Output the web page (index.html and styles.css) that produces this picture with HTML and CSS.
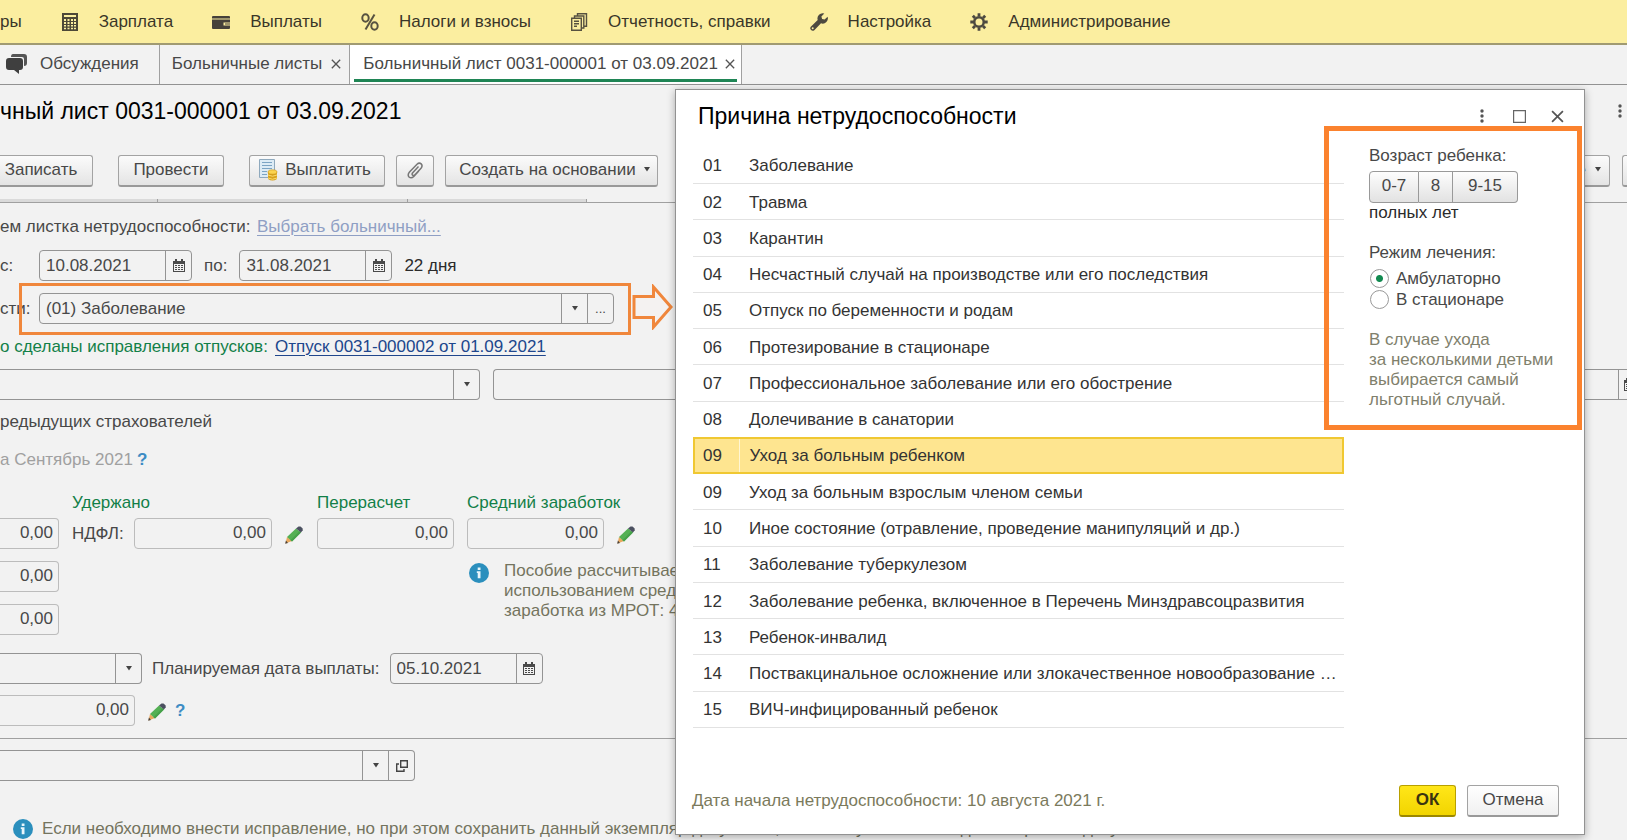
FILE: index.html
```html
<!DOCTYPE html>
<html lang="ru">
<head>
<meta charset="utf-8">
<title>Больничный лист 0031-000001 от 03.09.2021</title>
<link rel="stylesheet" href="styles.css">
</head>
<body>
<svg class="sprite" aria-hidden="true">
  <symbol id="i-cal" viewBox="0 0 12 13"><path fill="#4a4a4a" d="M0 2h12v11H0z"/><path fill="#4a4a4a" d="M2 0h2v3H2zM8 0h2v3H8z"/><path fill="#f2f2f2" d="M1 5h10v7H1z"/><path fill="#4a4a4a" d="M2 6h2v1H2zM5 6h2v1H5zM8 6h2v1H8zM2 8h2v1H2zM5 8h2v1H5zM8 8h2v1H8zM2 10h2v1H2zM5 10h2v1H5zM8 10h2v1H8z"/></symbol>
  <symbol id="i-down" viewBox="0 0 8 5"><path fill="#444" d="M1 0h6L4 4.500z"/></symbol>
  <symbol id="i-pencil" viewBox="0 0 18 18"><path fill="#e9a95e" d="M2 11l5 4-6.500 2.500z"/><path fill="#4a4038" d="M.9 14.600L3 17 .2 17.800z"/><path fill="#54b054" d="M11 2.500l5 4L7 15.500l-5-4.500z"/><path fill="#46a04a" d="M14.500 5.300l1.500 1.200L7 15.500l-1.500-1.200z"/><path fill="#4b5060" d="M11 2.500L13.500.5h2l2.200 2v1.800L16 6.500z"/></symbol>
  <symbol id="i-info" viewBox="0 0 20 20"><circle cx="10" cy="10" r="10" fill="#2b8fbd"/><path fill="#e8f6fb" d="M8.700 4.500h2.800v2.600H8.700zM7.800 8.300h3.700v6.900H8.700V9.900h-.9z"/></symbol>
  <symbol id="i-x" viewBox="0 0 12 12"><path d="M1 1l10 10M11 1L1 11" stroke="#555" stroke-width="1.600" fill="none"/></symbol>
  <symbol id="i-dots" viewBox="0 0 4 14"><g fill="#555"><circle cx="2" cy="2" r="1.700"/><circle cx="2" cy="7" r="1.700"/><circle cx="2" cy="12" r="1.700"/></g></symbol>
</svg>

<nav class="sections">
  <a href="#" class="section">ры</a>
  <a href="#" class="section"><svg viewBox="0 0 18 18"><path fill="#4d4838" d="M1 0h16v18H1z"/><path fill="#fbeea0" d="M3 2h12v2H3zM3 6h2v2H3zM6.500 6h2v2h-2zM10 6h2v2h-2zM13 6h2v2h-2zM3 9h2v2H3zM6.500 9h2v2h-2zM10 9h2v2h-2zM13 9h2v2h-2zM3 12h2v1.500H3zM6.500 12h2v1.500h-2zM10 12h2v1.500h-2zM13 12h2v1.500h-2zM3 14.800h2v1.500H3zM6.500 14.800h2v1.500h-2zM10 14.800h2v1.500h-2zM13 14.800h2v1.500h-2z"/></svg>Зарплата</a>
  <a href="#" class="section"><svg viewBox="0 0 18 18"><path fill="#45413a" d="M1 3h16q1 0 1 1v1.500H0V4q0-1 1-1zM0 6.500h18v3h-6.500v3H18V15q0 1-1 1H1q-1 0-1-1z"/><path fill="#45413a" d="M13 10.500h5v1h-5z"/></svg>Выплаты</a>
  <a href="#" class="section"><svg viewBox="0 0 18 18" fill="none" stroke="#575240" stroke-width="2"><ellipse cx="4.500" cy="5" rx="3.200" ry="3.700"/><ellipse cx="13.500" cy="13" rx="3.200" ry="3.700"/><path d="M13.500 1.500l-9 15"/></svg>Налоги и взносы</a>
  <a href="#" class="section"><svg viewBox="0 0 18 18" fill="none" stroke="#575240" stroke-width="1.400"><path d="M1.700 5.200h9.600v12H1.700zM4.500 5V3h9.300v12h-2M7.500 2.800V.8h9v12.500h-2.400M4 8.200h5M4 10.700h5M4 13.200h3"/></svg>Отчетность, справки</a>
  <a href="#" class="section"><svg viewBox="0 0 18 18"><path fill="#4d4a40" d="M17.600 3.700l-3 2.900-2.500-.7-.7-2.500L14.300.5A5.200 5.200 0 0 0 7.700 7L.8 13.700a2.500 2.500 0 0 0 3.500 3.500L11 10.300a5.200 5.200 0 0 0 6.600-6.600z"/><circle cx="2.700" cy="15.300" r="1" fill="#fbeea0"/></svg>Настройка</a>
  <a href="#" class="section"><svg viewBox="0 0 18 18" fill="none" stroke="#4d4a40"><circle cx="9" cy="9" r="4.800" stroke-width="2.600"/><path stroke-width="2.800" d="M9 .3v3M9 14.700v3M.3 9h3M14.700 9h3M2.800 2.800l2.200 2.200M13 13l2.200 2.200M15.200 2.800L13 5M5 13l-2.200 2.200"/></svg>Администрирование</a>
</nav>

<div class="tabs">
  <a href="#" class="tab tab-talk"><svg width="21" height="20" viewBox="0 0 21 20"><path fill="#555" d="M7 0h11q3 0 3 3v6q0 3-3 3V5q0-2-2-2H5q0-3 2-3z"/><path fill="#3f3f3f" d="M3 4h11q3 0 3 3v6q0 3-3 3h-1v4l-5-4H3q-3 0-3-3V7q0-3 3-3z"/></svg>Обсуждения</a>
  <a href="#" class="tab">Больничные листы<svg width="10" height="10"><use href="#i-x"/></svg></a>
  <a href="#" class="tab tab-active">Больничный лист 0031-000001 от 03.09.2021<svg width="10" height="10"><use href="#i-x"/></svg></a>
</div>

<main class="workspace">
  <div class="form">
    <div class="title-row"><h1>чный лист 0031-000001 от 03.09.2021</h1><button class="ghost" aria-label="Ещё"><svg width="4" height="14"><use href="#i-dots"/></svg></button></div>

    <div class="commands">
      <button class="btn btn-cut">Записать</button>
      <button class="btn btn-post">Провести</button>
      <button class="btn btn-pay"><svg width="20" height="22" viewBox="0 0 20 22"><path fill="#dcebf5" stroke="#8fa9bd" d="M.5.500h15v18H.5z"/><path stroke="#7ba4c4" d="M3 3.500h10M3 6.500h10M3 9.500h10M3 12.500h5M3 15.500h5"/><path fill="#d9a21c" d="M9 13h9v7q-4.500 3-9 0z"/><ellipse cx="13.500" cy="13" rx="4.500" ry="2.200" fill="#fbd34e" stroke="#c8921a" stroke-width=".6"/><path fill="none" stroke="#fbdc70" d="M9 16q4.500 2.500 9 0M9 19q4.500 2.500 9 0"/></svg>Выплатить</button>
      <button class="btn btn-clip" aria-label="Файлы"><svg width="18" height="18" viewBox="0 0 18 18" fill="none" stroke="#777" stroke-width="1.500"><path d="M12.500 5.500l-6 6.500q-1 1.500.3 2.300 1.200.6 2.200-.5l6-6.600q2-2.500.2-4.300-2-1.700-4.200.3L3.500 11q-2.300 2.700-.5 5 2.300 1.800 4.800-.5l5-5.500"/></svg></button>
      <button class="btn btn-create">Создать на основании<svg width="8" height="5"><use href="#i-down"/></svg></button>
      <span class="spacer"></span>
      <button class="btn btn-more">Еще<svg width="8" height="5"><use href="#i-down"/></svg></button>
      <button class="btn btn-edge" aria-label="Справка"></button>
    </div>

    <div class="pages"><i class="page-a"></i><i class="page-b"></i><i class="page-c"></i></div>

    <div class="row row-source"><span class="cap cap-source">ем листка нетрудоспособности:</span><a href="#" class="link link-pale">Выбрать больничный...</a></div>

    <div class="row row-dates">
      <label class="cap cap-from" for="from">с:</label>
      <span class="field field-date"><input id="from" value="10.08.2021"><button aria-label="Календарь"><svg width="12" height="13"><use href="#i-cal"/></svg></button></span>
      <label for="to">по:</label>
      <span class="field field-date"><input id="to" value="31.08.2021"><button aria-label="Календарь"><svg width="12" height="13"><use href="#i-cal"/></svg></button></span>
      <span class="dark">22 дня</span>
    </div>

    <div class="row row-reason">
      <label class="cap cap-reason" for="reason">сти:</label>
      <span class="field field-reason"><input id="reason" value="(01) Заболевание"><button aria-label="Список"><svg width="8" height="5"><use href="#i-down"/></svg></button><button class="small">...</button></span>
      <span class="frame frame-reason"></span>
      <svg class="arrow" width="42" height="46" viewBox="0 0 42 46"><path d="M2 12.500h19.500V3L39 23 21.500 43V33.500H2z" fill="#f4f2f1" stroke="#f0873c" stroke-width="3"/></svg>
    </div>

    <div class="row row-fix"><span class="cap cap-fix green">о сделаны исправления отпусков:</span><a href="#" class="link">Отпуск 0031-000002 от 01.09.2021</a></div>

    <div class="row row-wide">
      <span class="field field-cut field-cond"><input aria-label="Условие"><button aria-label="Список"><svg width="8" height="5"><use href="#i-down"/></svg></button></span>
      <span class="field field-rest"><input aria-label="Нарушение"><button class="sliver" aria-label="Календарь"><svg width="12" height="13"><use href="#i-cal"/></svg></button></span>
    </div>

    <div class="row row-prev"><span>редыдущих страхователей</span></div>
    <div class="row row-month"><span class="cap cap-month muted">а Сентябрь 2021</span><a href="#" class="help">?</a></div>

    <div class="sums">
      <div class="sum-col col-accrued">
        <span class="head"></span>
        <span class="field field-cut field-num"><input aria-label="Начислено" value="0,00" readonly></span>
        <span class="field field-cut field-num"><input aria-label="За счет работодателя" value="0,00" readonly></span>
        <span class="field field-cut field-num"><input aria-label="За счет ФСС" value="0,00" readonly></span>
      </div>
      <div class="sum-col col-held">
        <span class="head">Удержано</span>
        <div class="line"><label class="cap-ndfl" for="ndfl">НДФЛ:</label><span class="field field-num"><input id="ndfl" value="0,00" readonly></span><svg class="pencil" width="18" height="18"><use href="#i-pencil"/></svg></div>
      </div>
      <div class="sum-col col-recalc">
        <label class="head" for="recalc">Перерасчет</label>
        <span class="field field-num"><input id="recalc" value="0,00" readonly></span>
      </div>
      <div class="sum-col col-avg">
        <label class="head" for="avg">Средний заработок</label>
        <div class="line"><span class="field field-num"><input id="avg" value="0,00" readonly></span><svg class="pencil" width="18" height="18"><use href="#i-pencil"/></svg></div>
        <div class="note"><svg width="20" height="20"><use href="#i-info"/></svg><p>Пособие рассчитывае<br>использованием средн<br>заработка из МРОТ: 4</p></div>
      </div>
    </div>

    <div class="row row-plan">
      <span class="field field-cut field-pay"><input aria-label="Выплата"><button aria-label="Список"><svg width="8" height="5"><use href="#i-down"/></svg></button></span>
      <label for="plan">Планируемая дата выплаты:</label>
      <span class="field field-date"><input id="plan" value="05.10.2021"><button aria-label="Календарь"><svg width="12" height="13"><use href="#i-cal"/></svg></button></span>
    </div>
    <div class="row row-total">
      <span class="field field-cut field-num field-total"><input aria-label="Итого" value="0,00" readonly></span><svg class="pencil" width="18" height="18"><use href="#i-pencil"/></svg><a href="#" class="help">?</a>
    </div>
    <hr>
    <div class="row row-resp">
      <span class="field field-cut field-resp"><input aria-label="Ответственный"><button aria-label="Список"><svg width="8" height="5"><use href="#i-down"/></svg></button><button aria-label="Открыть"><svg width="12" height="12" viewBox="0 0 12 12" fill="none" stroke="#444" stroke-width="1.400"><path d="M4.700.7h6.600v6.600H4.700zM3 4H.7v7.300H8V9"/></svg></button></span>
    </div>
    <div class="hint"><svg width="20" height="20"><use href="#i-info"/></svg><span>Если необходимо внести исправление, но при этом сохранить данный экземпляр документа, воспользуйтесь командой Исправить документ</span></div>
  </div>

  <section class="dialog" role="dialog" aria-labelledby="dlg">
    <header class="dlg-head">
      <h2 id="dlg">Причина нетрудоспособности</h2>
      <button class="ghost ghost-menu" aria-label="Меню"><svg width="4" height="14"><use href="#i-dots"/></svg></button>
      <button class="ghost" aria-label="Развернуть"><svg width="13" height="13" viewBox="0 0 13 13"><path fill="none" stroke="#666" stroke-width="1.200" d="M.6.600h11.800v11.800H.6z"/></svg></button>
      <button class="ghost" aria-label="Закрыть"><svg width="13" height="13"><use href="#i-x"/></svg></button>
    </header>
    <div class="dlg-body">
      <table class="reasons">
        <tbody>
        <tr><td class="num">01</td><td>Заболевание</td></tr>
        <tr><td class="num">02</td><td>Травма</td></tr>
        <tr><td class="num">03</td><td>Карантин</td></tr>
        <tr><td class="num">04</td><td>Несчастный случай на производстве или его последствия</td></tr>
        <tr><td class="num">05</td><td>Отпуск по беременности и родам</td></tr>
        <tr><td class="num">06</td><td>Протезирование в стационаре</td></tr>
        <tr><td class="num">07</td><td>Профессиональное заболевание или его обострение</td></tr>
        <tr><td class="num">08</td><td>Долечивание в санатории</td></tr>
        <tr class="selected"><td class="num">09</td><td>Уход за больным ребенком</td></tr>
        <tr><td class="num">09</td><td>Уход за больным взрослым членом семьи</td></tr>
        <tr><td class="num">10</td><td>Иное состояние (отравление, проведение манипуляций и др.)</td></tr>
        <tr><td class="num">11</td><td>Заболевание туберкулезом</td></tr>
        <tr><td class="num">12</td><td>Заболевание ребенка, включенное в Перечень Минздравсоцразвития</td></tr>
        <tr><td class="num">13</td><td>Ребенок-инвалид</td></tr>
        <tr><td class="num">14</td><td>Поствакцинальное осложнение или злокачественное новообразование …</td></tr>
        <tr><td class="num">15</td><td>ВИЧ-инфицированный ребенок</td></tr>
        </tbody>
      </table>
      <aside class="side">
        <span>Возраст ребенка:</span>
        <div class="ages"><button class="age-a">0-7</button><button class="age-b">8</button><button class="age-c">9-15</button></div>
        <span class="dark">полных лет</span>
        <fieldset class="mode">
          <legend>Режим лечения:</legend>
          <label><input type="radio" name="mode" checked>Амбулаторно</label>
          <label><input type="radio" name="mode">В стационаре</label>
        </fieldset>
        <p class="side-note">В случае ухода<br>за несколькими детьми<br>выбирается самый<br>льготный случай.</p>
      </aside>
    </div>
    <footer class="dlg-foot"><span>Дата начала нетрудоспособности: 10 августа 2021 г.</span><button class="btn btn-ok">ОК</button><button class="btn btn-cancel">Отмена</button></footer>
    <span class="frame frame-side"></span>
  </section>
</main>
</body>
</html>
```
FILE: styles.css
```css
* { box-sizing: border-box; }
body {
  margin: 0;
  min-height: 100vh;
  overflow: hidden;
  background: #f2f2f2;
  color: #484848;
  font: 17px/20px "Liberation Sans", Arial, sans-serif;
}
button, input { font: inherit; color: inherit; }
a { color: inherit; text-decoration: none; }
svg { flex: none; display: block; }
.sprite { position: absolute; width: 0; height: 0; }
.dark { color: #2b2b2b; }
.green { color: #128048; }
.muted { color: #a0a0a0; }

.sections {
  display: flex;
  align-items: center;
  gap: 39px;
  height: 45px;
  background: #fbeea0;
  border-bottom: 2px solid #a09a72;
  color: #3a3628;
}
.section { display: flex; align-items: center; gap: 20px; white-space: nowrap; }
.section svg { width: 18px; height: 18px; }

.tabs { display: flex; height: 40px; border-bottom: 1px solid #929292; }
.tab {
  display: flex;
  align-items: center;
  gap: 9px;
  padding: 0 8px 1px 12px;
  border-right: 1px solid #a0a0a0;
  white-space: nowrap;
}
.tab-talk { padding: 0 20px 1px 6px; gap: 13px; }
.tab-active {
  height: 37px;
  gap: 7px;
  margin-left: 4px;
  padding: 3px 2px 0 9px;
  background: #fff;
  border-bottom: 3px solid #1f8555;
  border-right: 0;
  box-shadow: -4px 0 #fff, 4px 0 #fff, 0 2px #fff, -4px 2px #fff, 4px 2px #fff, 5px 0 #a0a0a0, 5px 2px #a0a0a0;
}

.workspace { position: relative; }
.form { display: flex; flex-direction: column; }
h1, h2 { margin: 0; font-size: 23px; line-height: 30px; font-weight: normal; color: #000; white-space: nowrap; }
.title-row { display: flex; justify-content: space-between; align-items: center; padding: 11px 5px 0 0; }
.ghost { display: grid; place-items: center; padding: 0; border: 0; background: none; }
.ghost-menu { margin-right: 4px; }

.btn {
  display: flex;
  align-items: center;
  justify-content: center;
  height: 32px;
  padding: 0 0 2px;
  border: 1px solid #a3a3a3;
  border-bottom: 2px solid #999;
  border-radius: 3px;
  background: linear-gradient(#fbfbfb, #e4e4e4);
  white-space: nowrap;
}
.commands { display: flex; margin-top: 29px; }
.btn-cut { width: 93px; border-left: 0; border-radius: 0 3px 3px 0; padding-right: 10px; }
.btn-post { width: 106px; margin-left: 25px; }
.btn-pay { width: 136px; margin-left: 25px; gap: 6px; padding-right: 4px; }
.btn-clip { width: 38px; margin-left: 11px; }
.btn-create { width: 213px; margin-left: 11px; gap: 7px; padding-left: 7px; }
.spacer { flex: 1; }
.btn-more { width: 70px; gap: 8px; justify-content: flex-end; padding-right: 7px; }
.btn-edge { width: 5px; margin-left: 12px; border-right: 0; border-radius: 3px 0 0 3px; }

.pages { display: flex; height: 4px; margin-top: 12px; border-bottom: 1px solid #a0a0a0; }
.pages i { background: #dadada; border-right: 1px solid #a0a0a0; }
.page-a { width: 158px; }
.page-b { width: 250px; }
.page-c { width: 179px; }

.row { display: flex; align-items: center; position: relative; height: 31px; white-space: nowrap; }
.cap { flex: none; }
.link { color: #20468c; text-decoration: underline; text-underline-offset: 3px; text-decoration-thickness: 1px; }
.link-pale { color: #8f9fc4; }
.help { color: #3d8cc4; font-weight: bold; }

.field {
  display: flex;
  flex: none;
  height: 31px;
  border: 1px solid #949494;
  border-radius: 4px;
  overflow: hidden;
}
.field input { flex: 1; min-width: 0; border: 0; padding: 0 6px; background: none; outline: 0; }
.field button { flex: none; display: grid; place-items: center; width: 26px; padding: 0; border: 0; border-left: 1px solid #949494; background: none; }
.field .small { font-size: 13px; }
.field-cut { border-left: 0; border-radius: 0 4px 4px 0; }
.field-num { border-color: #bcbcbc; }
.field-num input { text-align: right; padding: 0 5px 2px; }
.field-date { width: 153px; }

.row-source { margin-top: 8px; }
.cap-source { width: 257px; }
.row-dates { margin-top: 8px; gap: 12px; }
.cap-from { width: 27px; }
.row-reason { margin-top: 12px; }
.cap-reason { width: 39px; }
.field-reason { width: 575px; }
.row-fix { margin-top: 7px; }
.cap-fix { width: 275px; }
.row-wide { margin-top: 7px; gap: 13px; }
.field-cond { width: 480px; }
.field-rest { flex: 1; border-right: 0; border-radius: 4px 0 0 4px; }
.field .sliver { width: 9px; padding-left: 5px; place-items: center start; overflow: hidden; }
.row-prev { margin-top: 6px; }
.row-month { margin-top: 7px; }
.cap-month { width: 137px; }

.frame { position: absolute; pointer-events: none; }
.frame-reason { left: 19px; top: -10px; width: 612px; height: 52px; border: 3px solid #f0873c; }
.arrow { position: absolute; left: 632px; top: -9px; }

.sums { display: flex; gap: 13px; margin-top: 18px; }
.sum-col { display: flex; flex-direction: column; }
.head { height: 20px; margin-bottom: 5px; color: #128048; white-space: nowrap; }
.line { display: flex; align-items: center; }
.pencil { margin: 3px 0 0 13px; }
.col-accrued { width: 59px; }
.col-accrued .field + .field { margin-top: 12px; }
.col-held { width: 232px; }
.cap-ndfl { width: 62px; }
.col-held .field { width: 138px; }
.col-recalc { width: 137px; }
.col-avg .field { width: 137px; }
.note { display: flex; gap: 15px; margin: 12px 0 0 2px; color: #74745e; white-space: nowrap; }
.note svg { margin-top: 2px; }
.note p { margin: 0; }

.row-plan { margin-top: 18px; gap: 10px; }
.field-pay { width: 142px; }
.row-total { margin-top: 11px; }
.field-total { width: 135px; }
.row-total .help { margin-left: 9px; }
hr { width: 100%; margin: 12px 0 11px; border: 0; border-top: 1px solid #a0a0a0; }
.field-resp { width: 415px; }
.hint { display: flex; gap: 9px; margin: 38px 0 0 13px; color: #74745e; white-space: nowrap; }

.dialog {
  position: absolute;
  left: 675px;
  right: 42px;
  top: 4px;
  display: flex;
  flex-direction: column;
  background: #fff;
  border: 1px solid #929292;
  box-shadow: 0 2px 8px rgba(0, 0, 0, .3);
}
.dlg-head { display: flex; align-items: center; padding: 11px 20px 0 22px; gap: 25px; }
.dlg-head h2 { margin-right: auto; }
.dlg-body { display: flex; justify-content: space-between; margin-top: 17px; padding: 0 23px 0 17px; }
.reasons { flex: 1; height: 580px; border-collapse: collapse; color: #333; white-space: nowrap; }
.reasons td { padding: 2px 0 0 10px; border-bottom: 1px solid #e2e2e2; }
.reasons .num { width: 46px; }
.selected { background: #fee590; outline: 2px solid #f0c832; outline-offset: -2px; }
.selected .num { border-right: 1px solid #fff6d4; }
.side { display: flex; flex-direction: column; width: 192px; margin: -2px 0 0 25px; white-space: nowrap; }
.ages { display: flex; margin-top: 5px; }
.ages button { height: 32px; padding: 0 0 2px; border: 1px solid #999; border-left-width: 0; background: linear-gradient(#fdfdfd, #e2e2e2); }
.ages .age-a { width: 50px; border-left-width: 1px; border-radius: 4px 0 0 4px; }
.ages .age-b { width: 34px; }
.ages .age-c { width: 65px; border-radius: 0 4px 4px 0; }
.mode { margin: 20px 0 0; padding: 0; border: 0; }
.mode legend { padding: 0; margin-bottom: 5px; }
.mode label { display: flex; align-items: center; gap: 7px; height: 21px; }
.mode input {
  appearance: none;
  width: 19px;
  height: 19px;
  margin: 0 0 0 1px;
  border: 1px solid #999;
  border-radius: 50%;
  background: #fff;
}
.mode input:checked { background: radial-gradient(#128a50 3px, #fff 4px); }
.side-note { margin: 20px 0 0; color: #80806c; }
.dlg-foot { display: flex; align-items: center; margin-top: 57px; padding: 0 25px 17px 16px; gap: 11px; color: #7b7a5c; }
.dlg-foot span { flex: 1; }
.btn-ok { width: 57px; font-weight: bold; color: #3a3410; background: linear-gradient(#ffe619, #f2d500); border-color: #b8a000; border-bottom-color: #9c8800; }
.btn-cancel { width: 92px; color: #484848; background: linear-gradient(#fff, #f0f0f0); }
.frame-side { right: 2px; top: 36px; width: 258px; height: 304px; border: 5px solid #fb822e; }
```
